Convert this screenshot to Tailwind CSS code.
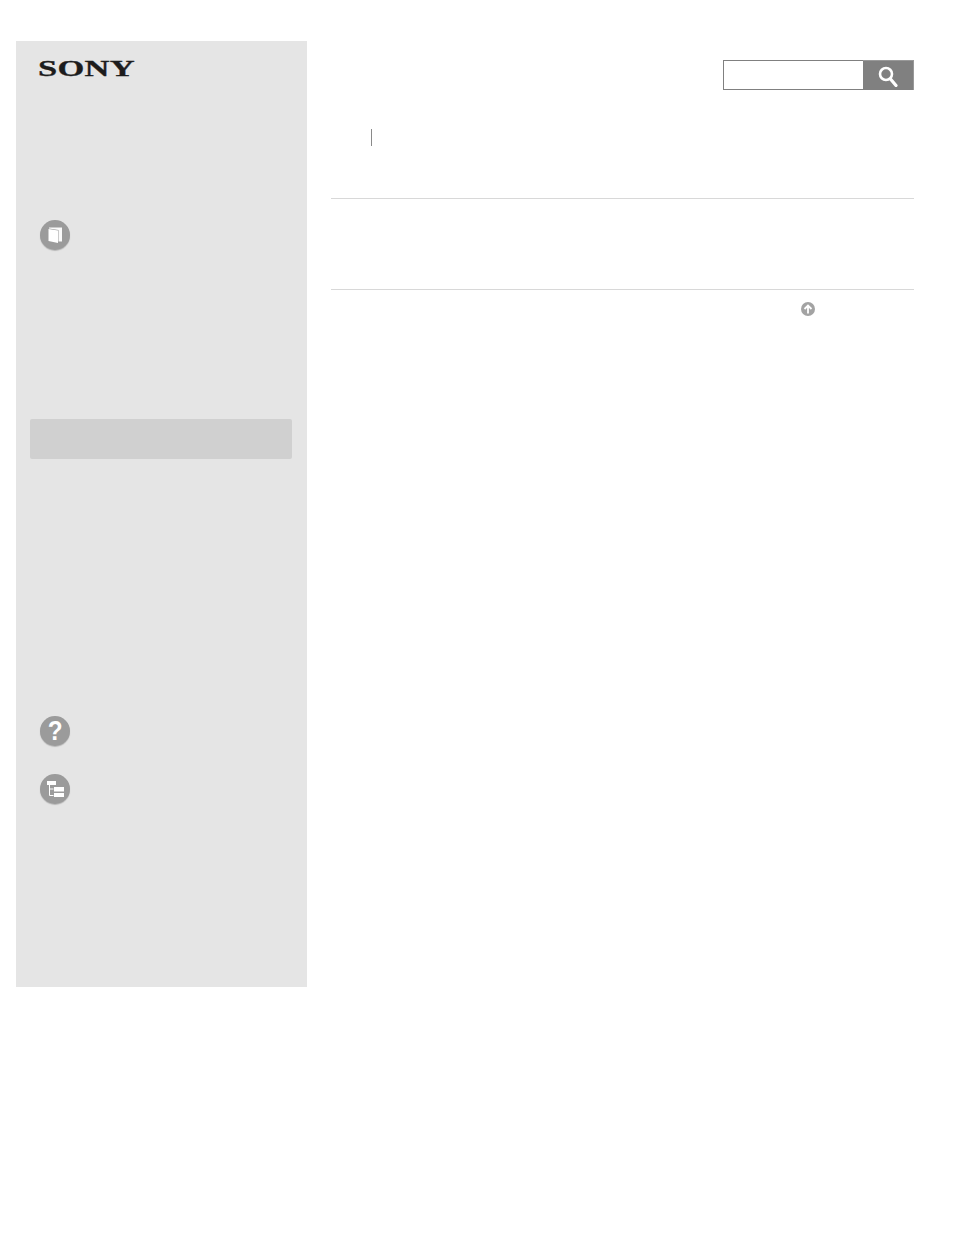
<!DOCTYPE html>
<html lang="en">
<head>
  <meta charset="UTF-8" />
  <title>Help Guide</title>
  <script src="https://cdn.jsdelivr.net/npm/@tailwindcss/browser@4"></script>
</head>
<body class="bg-white h-[1235px] overflow-hidden font-['Liberation_Sans',sans-serif]">
  <div class="flex items-start pt-[41px] pl-[16px]">

    <!-- Sidebar -->
    <aside class="w-[291px] h-[946px] bg-[#e5e5e5] flex flex-col">
      <div class="h-[179px] pl-[22px] pt-[17px]">
        <div class="w-[95px] h-[22px] leading-[22px] font-['Liberation_Serif',serif] font-bold text-[23px] text-[#1c1c1c] origin-left scale-x-[1.5] tracking-[0.2px] [-webkit-text-stroke:0.3px_#1c1c1c]">SONY</div>
      </div>

      <div class="pl-[24px] h-[199px]">
        <div class="w-[30px] h-[30px] rounded-full bg-[#9b9b9b] shadow-[0_1px_1px_rgba(0,0,0,0.2)] flex items-center justify-center">
          <svg width="16" height="18" viewBox="0 0 16 18">
            <path d="M2 1.5 H15 V15.5 H11.5 V4 L2 2.5 Z" fill="#fafafa"/>
            <path d="M1.5 3 L11 4.6 V17 L1.5 15 Z" fill="#fff"/>
          </svg>
        </div>
      </div>

      <div class="ml-[14px] mr-[15px] h-[40px] bg-[#d0d0d0] rounded-[2px]"></div>

      <div class="pl-[24px] pt-[257px] flex flex-col gap-[28px]">
        <div class="w-[30px] h-[30px] rounded-full bg-[#9b9b9b] shadow-[0_1px_1px_rgba(0,0,0,0.2)] flex items-center justify-center text-white font-bold text-[27px] leading-none">
          <span class="scale-x-90">?</span>
        </div>
        <div class="w-[30px] h-[30px] rounded-full bg-[#9b9b9b] shadow-[0_1px_1px_rgba(0,0,0,0.2)] flex items-center justify-center">
          <svg width="18" height="18" viewBox="0 0 18 18" fill="none">
            <rect x="1" y="1" width="9" height="4" fill="#fff"/>
            <rect x="8" y="7" width="10" height="4.5" fill="#fff"/>
            <rect x="8" y="13" width="10" height="4" fill="#fff"/>
            <path d="M3.5 5 V15.5 H7.5 M3.5 9 H7.5" stroke="#fff" stroke-width="1"/>
          </svg>
        </div>
      </div>
    </aside>

    <!-- Main -->
    <main class="w-[583px] ml-[24px]">
      <div class="flex justify-end pt-[19px]">
        <div class="w-[140px] h-[30px] bg-white border border-[#808080] border-r-0"></div>
        <div class="w-[51px] h-[30px] bg-[#808080] border-t border-r border-[#999] flex items-center justify-center">
          <svg width="20" height="22" viewBox="0 0 20 22" fill="none">
            <circle cx="8" cy="9" r="6" stroke="#fff" stroke-width="2.6"/>
            <path d="M12.5 14 L18 20.5" stroke="#fff" stroke-width="3.2" stroke-linecap="round"/>
          </svg>
        </div>
      </div>

      <div class="pt-[39px] pl-[40px]">
        <div class="w-px h-[17px] bg-[#8a8a8a]"></div>
      </div>

      <div class="mt-[52px] h-px bg-[#d8d8d8]"></div>
      <div class="mt-[90px] h-px bg-[#d8d8d8]"></div>

      <div class="pt-[12px] pl-[470px]">
        <div class="w-[14px] h-[14px] rounded-full bg-[#a3a3a3] flex items-center justify-center">
          <svg width="10" height="10" viewBox="0 0 10 10" fill="none">
            <path d="M5 9.5 V1.5 M1.5 5 L5 1.5 L8.5 5" stroke="#fff" stroke-width="1.8"/>
          </svg>
        </div>
      </div>
    </main>
  </div>
</body>
</html>
